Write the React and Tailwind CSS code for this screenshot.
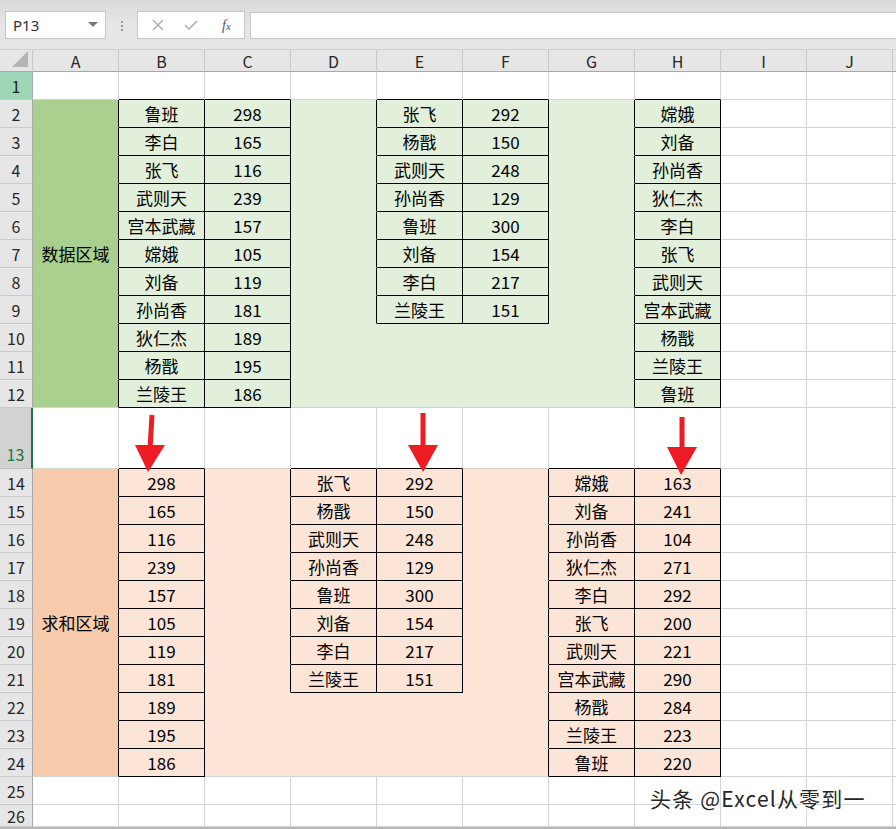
const COLS = ["A", "B", "C", "D", "E", "F", "G", "H", "I", "J", "K"];
const ci = (c) => COLS.indexOf(c);

const DATA = {};
const put = (col, start, values) =>
  values.forEach((v, i) => {
    DATA[col + (start + i)] = v;
  });

const heroes1 = ["鲁班", "李白", "张飞", "武则天", "宫本武藏", "嫦娥", "刘备", "孙尚香", "狄仁杰", "杨戬", "兰陵王"];
const nums1 = [298, 165, 116, 239, 157, 105, 119, 181, 189, 195, 186];
const heroes2 = ["张飞", "杨戬", "武则天", "孙尚香", "鲁班", "刘备", "李白", "兰陵王"];
const nums2 = [292, 150, 248, 129, 300, 154, 217, 151];
const heroes3 = ["嫦娥", "刘备", "孙尚香", "狄仁杰", "李白", "张飞", "武则天", "宫本武藏", "杨戬", "兰陵王", "鲁班"];
const nums3 = [163, 241, 104, 271, 292, 200, 221, 290, 284, 223, 220];

put("B", 2, heroes1);
put("C", 2, nums1);
put("E", 2, heroes2);
put("F", 2, nums2);
put("H", 2, heroes3);
put("B", 14, nums1);
put("D", 14, heroes2);
put("E", 14, nums2);
put("G", 14, heroes3);
put("H", 14, nums3);
DATA.A7 = "数据区域";
DATA.A19 = "求和区域";

const BOXES = [
  ["B", 2, "C", 12],
  ["E", 2, "F", 9],
  ["H", 2, "H", 12],
  ["B", 14, "B", 24],
  ["D", 14, "E", 21],
  ["G", 14, "H", 24],
];

const inBox = (c, r) =>
  BOXES.some(([c1, r1, c2, r2]) => c >= ci(c1) && c <= ci(c2) && r >= r1 && r <= r2);

const fillOf = (c, r) => {
  if (c > 7) return null;
  if (r >= 2 && r <= 12) return c === 0 ? "dg" : "g";
  if (r >= 14 && r <= 24) return c === 0 ? "do" : "o";
  return null;
};

const BG = {
  dg: "bg-[#a9d08e]",
  g: "bg-[#e2efda]",
  do: "bg-[#f8cbad]",
  o: "bg-[#fce4d6]",
};
const BR = {
  black: "border-r-black",
  grid: "border-r-[#d4d4d4]",
  dg: "border-r-[#a9d08e]",
  g: "border-r-[#e2efda]",
  do: "border-r-[#f8cbad]",
  o: "border-r-[#fce4d6]",
};
const BB = {
  black: "border-b-black",
  grid: "border-b-[#d4d4d4]",
  dg: "border-b-[#a9d08e]",
  g: "border-b-[#e2efda]",
  do: "border-b-[#f8cbad]",
  o: "border-b-[#fce4d6]",
};

const rightKey = (c, r) => {
  if (inBox(c, r) || inBox(c + 1, r)) return "black";
  const f = fillOf(c, r);
  if (f && fillOf(c + 1, r) === f) return f;
  return "grid";
};
const bottomKey = (c, r) => {
  if (inBox(c, r) || inBox(c, r + 1)) return "black";
  const f = fillOf(c, r);
  if (f && fillOf(c, r + 1) === f) return f;
  return "grid";
};

const ROWS = Array.from({ length: 26 }, (_, i) => i + 1);
const rowHeight = (r) => (r === 13 ? "h-[61px]" : r === 26 ? "h-[22px]" : "h-[28px]");

function RowHeader({ r }) {
  if (r === 1) {
    return (
      <div className="w-[33px] shrink-0 flex items-center justify-center bg-[#9fd5b7] border-r border-b border-r-[#a8a8a8] border-b-[#c9c9c9] text-[16px] text-[#1e1e1e]">
        1
      </div>
    );
  }
  if (r === 13) {
    return (
      <div className="w-[33px] shrink-0 flex items-end justify-center pb-[2px] bg-[#d2d2d2] border-r-2 border-b border-r-[#217346] border-b-[#bdbdbd] text-[16px] text-[#217346]">
        13
      </div>
    );
  }
  return (
    <div className="w-[33px] shrink-0 flex items-center justify-center bg-[#e6e6e6] border-r border-b border-r-[#a8a8a8] border-b-[#c9c9c9] text-[16px] text-[#262626]">
      {r}
    </div>
  );
}

function Cell({ c, r }) {
  const key = COLS[c] + r;
  const text = DATA[key];
  const f = fillOf(c, r);
  return (
    <div
      className={`w-[86px] shrink-0 flex items-center justify-center border-r border-b whitespace-nowrap text-[17px] text-black ${
        f ? BG[f] : "bg-white"
      } ${BR[rightKey(c, r)]} ${BB[bottomKey(c, r)]}`}
    >
      {text}
    </div>
  );
}

function Arrow({ x1, y1, x2, y2, tip }) {
  return (
    <g>
      <line x1={x1} y1={y1} x2={x2} y2={y2 + 4} stroke="#ed1c24" strokeWidth="5" />
      <polygon points={`${x2 - 15},${y2} ${x2 + 15},${y2} ${tip[0]},${tip[1]}`} fill="#ed1c24" />
    </g>
  );
}

export default function App() {
  return (
    <div className="relative w-[896px] h-[829px] overflow-hidden bg-white font-['Noto_Sans_CJK_SC','Noto_Sans',sans-serif]">
      {/* formula bar */}
      <div className="h-[50px] flex items-start bg-gradient-to-b from-[#d9d9d9] via-[#e6e6e6] to-[#e6e6e6] border-b border-[#d0d0d0]">
        <div className="ml-[5px] mt-[11px] w-[101px] h-[28px] bg-white border border-[#c6c6c6] flex items-center justify-between pl-[7px] pr-[7px]">
          <span className="text-[15px] text-[#333] font-['Noto_Sans',sans-serif]">P13</span>
          <svg width="10" height="6" viewBox="0 0 10 6">
            <polygon points="0,0 10,0 5,5" fill="#7a7a7a" />
          </svg>
        </div>
        <div className="w-[31px] h-[50px] flex flex-col items-center justify-center gap-[2px] pt-[1px]">
          <span className="w-[2px] h-[2px] bg-[#9a9a9a]" />
          <span className="w-[2px] h-[2px] bg-[#9a9a9a]" />
          <span className="w-[2px] h-[2px] bg-[#9a9a9a]" />
        </div>
        <div className="mt-[11px] w-[108px] h-[28px] bg-white border border-[#c6c6c6] flex items-center">
          <svg className="ml-[14px]" width="12" height="12" viewBox="0 0 12 12">
            <path d="M1 1 L11 11 M11 1 L1 11" stroke="#b0b0b0" strokeWidth="1.5" />
          </svg>
          <svg className="ml-[20px]" width="14" height="12" viewBox="0 0 14 12">
            <path d="M1 6 L5 10 L13 2" stroke="#b0b0b0" strokeWidth="1.6" fill="none" />
          </svg>
          <span className="ml-[24px] text-[14px] italic text-[#555] font-['Liberation_Serif',serif]">
            f<span className="text-[11px]">x</span>
          </span>
        </div>
        <div className="ml-[5px] mt-[12px] flex-1 h-[27px] bg-white border border-[#c6c6c6] border-r-0" />
      </div>

      {/* column headers */}
      <div className="flex h-[22px]">
        <div className="relative w-[33px] shrink-0 bg-[#e6e6e6] border-r border-b border-r-[#c9c9c9] border-b-[#a8a8a8]">
          <svg className="absolute right-[4px] bottom-[4px]" width="16" height="16" viewBox="0 0 16 16">
            <polygon points="16,0 16,16 0,16" fill="#b4b4b4" />
          </svg>
        </div>
        {COLS.map((c) => (
          <div
            key={c}
            className="w-[86px] shrink-0 flex items-center justify-center bg-[#e6e6e6] border-r border-b border-r-[#c9c9c9] border-b-[#a8a8a8] text-[16px] text-[#262626]"
          >
            {c === "K" ? "" : c}
          </div>
        ))}
      </div>

      {/* sheet rows */}
      {ROWS.map((r) => (
        <div key={r} className={`flex ${rowHeight(r)}`}>
          <RowHeader r={r} />
          {COLS.map((c, i) => (
            <Cell key={c} c={i} r={r} />
          ))}
        </div>
      ))}
      <div className="h-[2px] bg-[#b8b8b8]" />

      {/* arrows over the grid */}
      <svg className="absolute left-0 top-0 pointer-events-none" width="896" height="829">
        <Arrow x1={152} y1={415} x2={150} y2={445} tip={[148, 472]} />
        <Arrow x1={423} y1={413} x2={423} y2={445} tip={[423, 472]} />
        <Arrow x1={682} y1={417} x2={682} y2={447} tip={[681, 475]} />
      </svg>

      {/* watermark */}
      <div className="absolute left-[650px] top-[783px] text-[21px] text-[#262626] tracking-[1.2px] [text-shadow:0_0_2px_#fff,0_0_2px_#fff,0_0_3px_#fff]">
        头条 @Excel从零到一
      </div>
    </div>
  );
}
